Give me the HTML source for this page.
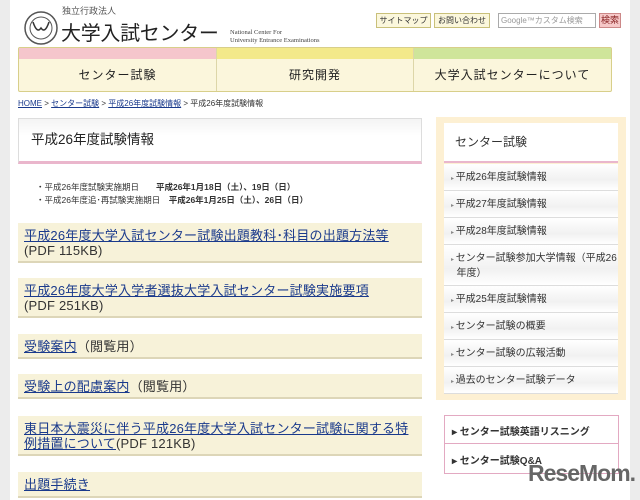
<!DOCTYPE html>
<html><head><meta charset="utf-8"><style>
*{margin:0;padding:0;box-sizing:border-box}
body{width:640px;height:500px;overflow:hidden;background:#ececec;font-family:"Liberation Sans","Noto Sans CJK JP",sans-serif;color:#333;position:relative}
.pg{position:absolute;left:10px;top:0;width:620px;height:500px;background:#fff}
.a{position:absolute;white-space:nowrap}
a{color:#1a3a8c;text-decoration:underline}
.btn{position:absolute;top:13px;height:15px;border:1px solid #c9c07a;background:#fbf7dc;font-size:8px;line-height:13px;text-align:center;color:#333;white-space:nowrap;overflow:hidden}
.nav{position:absolute;left:18px;top:47px;width:594px;height:45px;border:1px solid #d8cf8a;background:#fbf6dc;border-radius:2px}
.nc{position:absolute;top:0;height:43px;border-right:1px solid #ddd6a8;text-align:center;font-size:12px;line-height:30px;padding-top:12px;color:#222;letter-spacing:1px}
.st{position:absolute;top:0;left:0;right:0;height:11px}
.lb{position:absolute;left:18px;width:404px;background:#f7f2d9;border-bottom:2px solid #ddd6b8;padding:5px 6px 3px;font-size:13px;line-height:15px;letter-spacing:.2px}
.si{position:absolute;left:444px;width:174px;height:27px;border-bottom:1px solid #ddd;background:linear-gradient(#fff,#f1f1f1 60%,#fff);font-size:10px;line-height:27px;padding-left:7px;color:#333}
.si:before{content:"▸ ";font-size:6px;color:#888}
</style></head><body><div class="pg"></div>
<svg class="a" style="left:24px;top:11px" width="34" height="34"><circle cx="17" cy="17" r="16" fill="#fff" stroke="#555" stroke-width="1.5"/><circle cx="17" cy="17" r="11" fill="none" stroke="#555"/><path d="M9 11 Q13 23 17 17 Q21 23 25 11" fill="none" stroke="#333" stroke-width="1.5"/></svg>
<div class="a" style="left:62px;top:4px;font-size:9px;color:#555">独立行政法人</div>
<div class="a" style="left:61px;top:17px;font-size:20px;color:#222;letter-spacing:-.3px">大学入試センター</div>
<div class="a" style="left:230px;top:29px;font-size:6.5px;line-height:8px;color:#444;font-family:'Liberation Serif',serif">National Center For<br>University Entrance Examinations</div>
<div class="btn" style="left:376px;width:55px">サイトマップ</div>
<div class="btn" style="left:434px;width:56px">お問い合わせ</div>
<div class="a" style="left:498px;top:13px;width:98px;height:15px;border:1px solid #aaa;background:#fff;font-size:8px;color:#999;line-height:13px;padding-left:2px">Google™カスタム検索</div>
<div class="a" style="left:599px;top:13px;width:22px;height:15px;border:1px solid #c88;background:#f6c8c8;font-size:9px;line-height:13px;text-align:center;color:#822">検索</div>
<div class="nav">
<div class="nc" style="left:0;width:198px"><div class="st" style="background:#f5c6cc"></div>センター試験</div>
<div class="nc" style="left:198px;width:197px"><div class="st" style="background:#f3e98a"></div>研究開発</div>
<div class="nc" style="left:395px;width:197px;border-right:none"><div class="st" style="background:#cfe59a"></div>大学入試センターについて</div>
</div>
<div class="a" style="left:18px;top:98px;font-size:8px"><a>HOME</a> &gt; <a>センター試験</a> &gt; <a>平成26年度試験情報</a> &gt; 平成26年度試験情報</div>
<div class="a" style="left:18px;top:118px;width:404px;height:46px;border:1px solid #ddd;border-bottom:3px solid #eab6cc;background:linear-gradient(#f4f4f4,#fff 40%);font-size:13.5px;line-height:42px;padding-left:12px;color:#222">平成26年度試験情報</div>
<div class="a" style="left:36px;top:181px;font-size:8.5px;line-height:13px;color:#333">・平成26年度試験実施期日　　<b>平成26年1月18日（土）、19日（日）</b><br>・平成26年度追･再試験実施期日　<b>平成26年1月25日（土）、26日（日）</b></div>
<div class="lb" style="top:223px"><a>平成26年度大学入試センター試験出題教科･科目の出題方法等</a><br>(PDF 115KB)</div>
<div class="lb" style="top:278px"><a>平成26年度大学入学者選抜大学入試センター試験実施要項</a><br>(PDF 251KB)</div>
<div class="lb" style="top:334px;height:25px"><a>受験案内</a>（閲覧用）</div>
<div class="lb" style="top:374px;height:25px"><a>受験上の配慮案内</a>（閲覧用）</div>
<div class="lb" style="top:416px"><a>東日本大震災に伴う平成26年度大学入試センター試験に関する特<br>例措置について</a>(PDF 121KB)</div>
<div class="lb" style="top:472px;height:26px"><a>出題手続き</a></div>
<div class="a" style="left:436px;top:117px;width:190px;height:283px;background:#fdf0d3"></div>
<div class="a" style="left:444px;top:123px;width:174px;height:40px;background:#fff;border-bottom:2px solid #eab6cc;font-size:12px;line-height:38px;padding-left:11px;color:#333">センター試験</div>
<div class="si" style="top:164px">平成26年度試験情報</div>
<div class="si" style="top:191px">平成27年度試験情報</div>
<div class="si" style="top:218px">平成28年度試験情報</div>
<div class="si" style="top:245px;height:41px;line-height:13px;padding-top:7px">センター試験参加大学情報（平成26<br>&nbsp;&nbsp;年度）</div>
<div class="si" style="top:286px">平成25年度試験情報</div>
<div class="si" style="top:313px">センター試験の概要</div>
<div class="si" style="top:340px">センター試験の広報活動</div>
<div class="si" style="top:367px">過去のセンター試験データ</div>
<div class="a" style="left:444px;top:415px;width:175px;height:59px;border:1px solid #e3a9c2;background:#fff"></div>
<div class="a" style="left:452px;top:423px;font-size:10px;font-weight:bold;color:#333">▸ センター試験英語リスニング</div>
<div class="a" style="left:445px;top:443px;width:173px;border-top:1px solid #e3a9c2"></div>
<div class="a" style="left:452px;top:452px;font-size:10px;font-weight:bold;color:#333">▸ センター試験Q&amp;A</div>
<div class="a" style="left:528px;top:460px;font-size:23px;font-weight:bold;color:#666;letter-spacing:-1px">ReseMom.</div>
</body></html>
